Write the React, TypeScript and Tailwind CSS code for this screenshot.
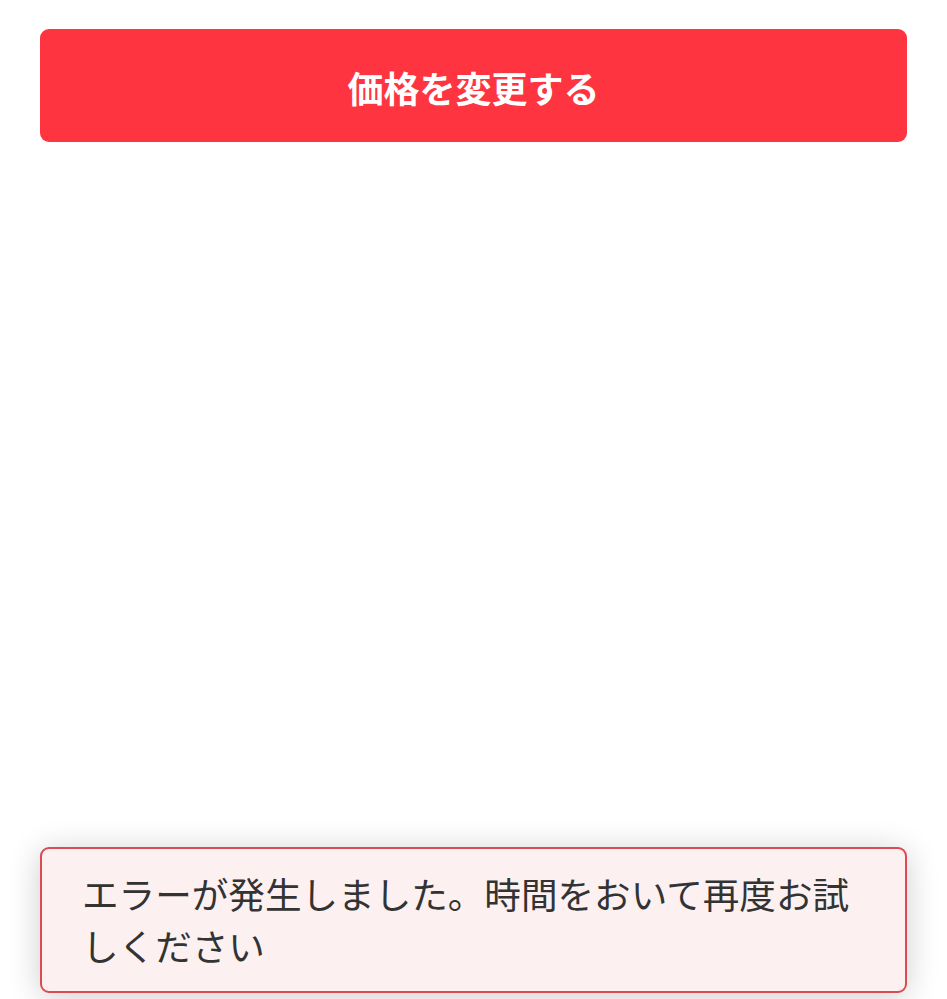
import React from 'react';

const jpFont = "font-['Noto_Sans_CJK_JP','Noto_Sans',sans-serif]";

export default function App() {
  return (
    <div className={`relative min-h-[999px] bg-white ${jpFont}`}>
      <div className="px-[40px] pt-[29px]">
        <button
          type="button"
          className="flex h-[113px] w-full items-center justify-center rounded-[9px] bg-[#fe3440] pt-[2px] text-[36px] font-bold text-white"
        >
          価格を変更する
        </button>
      </div>

      {/* error toast */}
      <div className="absolute bottom-[6px] left-[40px] right-[40px] rounded-[9px] border-2 border-[#dc4a52] bg-[#fcf0f1] py-[19px] pl-[40px] pr-[40px] shadow-[0_4px_32px_rgba(0,0,0,0.2)]">
        <p className="text-[36.6px] leading-[52px] text-[#333333]">
          エラーが発生しました。時間をおいて再度お試しください
        </p>
      </div>
    </div>
  );
}
